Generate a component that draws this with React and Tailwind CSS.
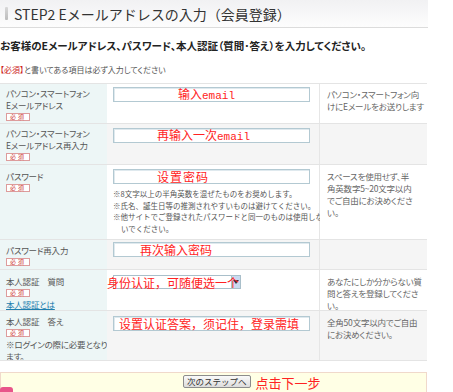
const jp = "font-['Noto_Sans_CJK_JP',sans-serif]";
const palt = "[font-feature-settings:'palt']";

function Badge() {
  return (
    <div className="mt-[2px] w-[24px] h-[8px] border border-[#dd9c9c] bg-white text-[#cc3333] text-[6px] leading-none flex items-center justify-center tracking-[2px]">
      必須
    </div>
  );
}

function Field({ pad, children }) {
  return (
    <div className={`w-[197px] h-[15px] border border-[#b3c9d2] bg-white shadow-[inset_1px_1px_0_#dfe9ee] flex items-center ${pad}`}>
      <span className="text-[12px] leading-none text-[#ff2222] font-['Noto_Sans_CJK_SC',sans-serif] whitespace-nowrap">
        {children}
      </span>
    </div>
  );
}

function Mail() {
  return <span className="font-['Liberation_Mono',monospace] text-[11px]">email</span>;
}

function Row({ h, shade, label, input, note, inputTop }) {
  const bg = shade ? 'bg-[#f5f5f5]' : 'bg-white';
  return (
    <div className={`grid grid-cols-[107px_213px_107px] border-b border-[#e4e4e4] overflow-hidden ${h}`}>
      <div className={`bg-[#edf6f6] pl-[6px] pt-[3px] text-[8.5px] leading-[12px] tracking-[-0.2px] text-[#555] whitespace-nowrap ${palt}`}>{label}</div>
      <div className={`${bg} pl-[6px] border-r border-[#e6e6e6] ${inputTop}`}>{input}</div>
      <div className={`${bg} pl-[7px] pt-[4px] text-[8.5px] leading-[12px] tracking-[-0.2px] text-[#666] whitespace-nowrap ${palt}`}>{note}</div>
    </div>
  );
}

export default function App() {
  return (
    <div className={`w-[453px] h-[392px] overflow-hidden bg-white ${jp}`}>
      {/* Header */}
      <div className="w-[428px] h-[28px] border-b border-[#dcdcdc] bg-gradient-to-b from-[#f1f1f3] to-[#fdfdfd] flex items-center pl-[5px] gap-[6px]">
        <div className="w-[3px] h-[13px] rounded-[1px] bg-gradient-to-b from-[#d8d8d8] to-[#bcbcbc]" />
        <h1 className="text-[14px] text-[#333] leading-none">STEP2 Eメールアドレスの入力（会員登録）</h1>
      </div>

      <p className={`mt-[12px] text-[10.5px] font-bold text-[#222] leading-[12px] ${palt}`}>
        お客様のEメールアドレス、パスワード、本人認証（質問･答え）を入力してください。
      </p>
      <p className={`mt-[12px] text-[8px] text-[#555] leading-[12px] ${palt}`}>
        <span className="text-[#cc2222]">【必須】</span>と書いてある項目は必ず入力してください
      </p>

      {/* Form table */}
      <div className="mt-[7px] w-[427px] border-t border-[#e4e4e4]">
        <Row
          h="h-[40px]"
          inputTop="pt-[3px]"
          label={<><div>パソコン・スマートフォン</div><div>Eメールアドレス</div><Badge /></>}
          input={<Field pad="pl-[64px]">输入<Mail /></Field>}
          note={<><div>パソコン・スマートフォン向</div><div>けにEメールをお送りします</div></>}
        />
        <Row
          h="h-[41px]"
          shade
          inputTop="pt-[4px]"
          label={<><div>パソコン・スマートフォン</div><div>Eメールアドレス再入力</div><Badge /></>}
          input={<Field pad="pl-[43px]">再输入一次<Mail /></Field>}
        />
        <Row
          h="h-[75px]"
          inputTop="pt-[4px]"
          label={<><div className="mt-[2px]">パスワード</div><Badge /></>}
          input={
            <>
              <Field pad="pl-[43px]"><span className="tracking-[1px]">设置密码</span></Field>
              <div className="mt-[4px] text-[7.5px] leading-[11.7px] text-[#555] whitespace-nowrap">
                <div>※8文字以上の半角英数を混ぜたものをお奨めします。</div>
                <div>※氏名、誕生日等の推測されやすいものは避けてください。</div>
                <div>※他サイトでご登録されたパスワードと同一のものは使用しな</div>
                <div className="pl-[8px]">いでください。</div>
              </div>
            </>
          }
          note={<div className="pt-[1px]"><div>スペースを使用せず、半</div><div>角英数字5~20文字以内</div><div>でご自由にお決めくださ</div><div>い。</div></div>}
        />
        <Row
          h="h-[30px]"
          shade
          inputTop="pt-[2px]"
          label={<><div className="mt-[1px]">パスワード再入力</div><Badge /></>}
          input={<Field pad="pl-[26px]">再次输入密码</Field>}
        />
        <Row
          h="h-[41px]"
          inputTop="pt-[5px]"
          label={
            <>
              <div className="mt-[2px]">本人認証　質問</div>
              <Badge />
              <a className="block mt-[1px] text-[#1f7fae] underline">本人認証とは</a>
            </>
          }
          input={
            <div className="relative w-[128px] h-[14px] border border-[#a9bfca] bg-white flex justify-end">
              <div className="w-[9px] h-full bg-[#c9daf0] border-l border-[#a9bfca] flex items-center justify-center">
                <svg width="6" height="4" viewBox="0 0 6 4"><path d="M0 0h6L3 4z" fill="#334" /></svg>
              </div>
              <span className="absolute left-[-7px] top-[-1px] text-[12px] leading-[15px] text-[#ff2222] font-['Noto_Sans_CJK_SC',sans-serif] whitespace-nowrap">
                身份认证，可随便选一个
              </span>
            </div>
          }
          note={<div className="pt-[1px]"><div>あなたにしか分からない質</div><div>問と答えを登録してくださ</div><div>い。</div></div>}
        />
        <Row
          h="h-[50px]"
          shade
          inputTop="pt-[5px]"
          label={
            <>
              <div className="mt-[1px]">本人認証　答え</div>
              <Badge />
              <div className="mt-[1px]">※ログインの際に必要となり</div>
              <div>ます。</div>
            </>
          }
          input={<Field pad="pl-[5px]">设置认证答案，须记住，登录需填</Field>}
          note={<div className="pt-[1px]"><div>全角50文字以内でご自由</div><div>にお決めください。</div></div>}
        />
      </div>

      {/* Footer */}
      <div className="relative mt-[11px] w-[427px] h-[30px] border border-[#f0d9cb] bg-[#ffffe5] flex items-start pt-[2px] pl-[182px] gap-[5px]">
        <button className="h-[13px] px-[3px] border border-[#8c8c8c] rounded-[2px] bg-gradient-to-b from-[#fafafa] to-[#dcdcdc] text-[8.5px] leading-none text-[#333] whitespace-nowrap">
          次のステップへ
        </button>
        <span className="text-[13px] leading-[15px] text-[#ff2222] font-['Noto_Sans_CJK_SC',sans-serif] whitespace-nowrap">点击下一步</span>
        <div className="absolute left-[-1px] top-[14px] w-[13px] h-[8px] rounded-[3px] bg-[#e8558a]" />
      </div>
    </div>
  );
}
